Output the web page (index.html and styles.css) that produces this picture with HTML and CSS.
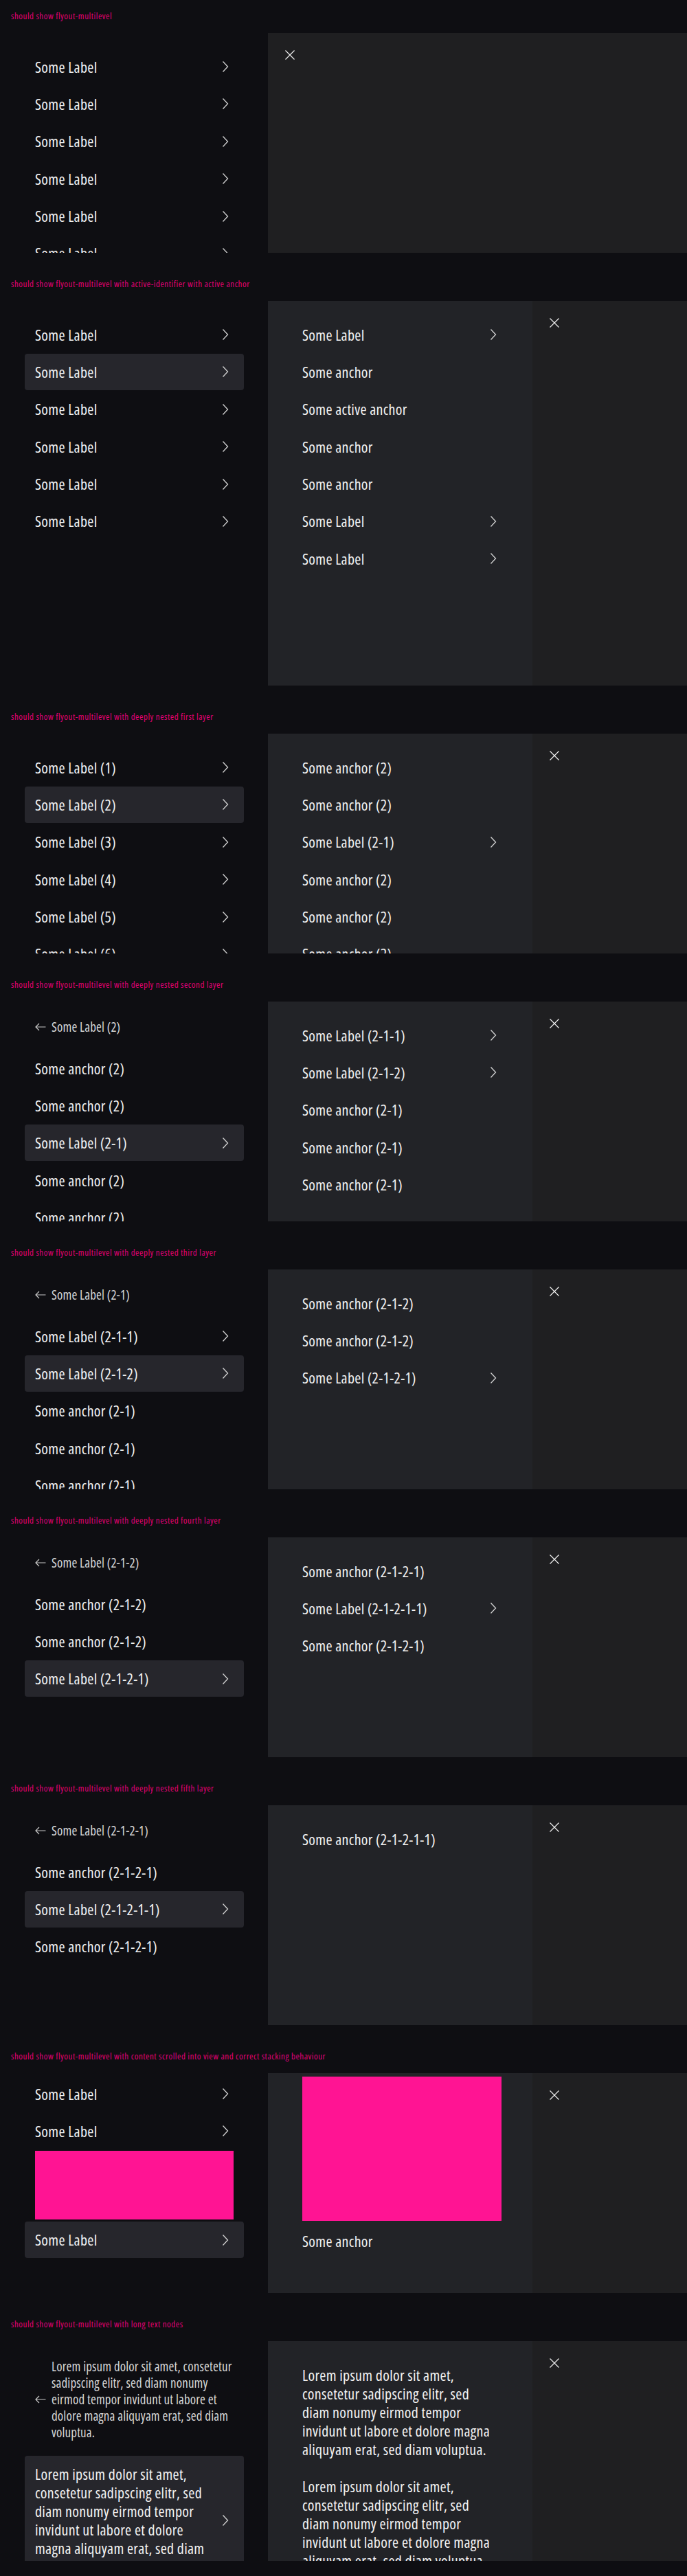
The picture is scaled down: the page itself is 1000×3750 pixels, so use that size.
FILE: index.html
```html
<!DOCTYPE html>
<html lang="en">
<head>
<meta charset="utf-8">
<title>flyout-multilevel</title>
<link rel="stylesheet" href="styles.css">
</head>
<body>

<!-- 1 -->
<section class="demo">
  <p class="demo-title"><span>should show flyout-multilevel</span></p>
  <div class="flyout">
    <div class="col col-main">
      <ul class="list">
        <li class="item"><span class="label">Some Label</span><svg class="chev" viewBox="0 0 24 24"><path d="M8.5 4.5l7 7.5-7 7.5"/></svg></li>
        <li class="item"><span class="label">Some Label</span><svg class="chev" viewBox="0 0 24 24"><path d="M8.5 4.5l7 7.5-7 7.5"/></svg></li>
        <li class="item"><span class="label">Some Label</span><svg class="chev" viewBox="0 0 24 24"><path d="M8.5 4.5l7 7.5-7 7.5"/></svg></li>
        <li class="item"><span class="label">Some Label</span><svg class="chev" viewBox="0 0 24 24"><path d="M8.5 4.5l7 7.5-7 7.5"/></svg></li>
        <li class="item"><span class="label">Some Label</span><svg class="chev" viewBox="0 0 24 24"><path d="M8.5 4.5l7 7.5-7 7.5"/></svg></li>
        <li class="item"><span class="label">Some Label</span><svg class="chev" viewBox="0 0 24 24"><path d="M8.5 4.5l7 7.5-7 7.5"/></svg></li>
      </ul>
    </div>
    <div class="col col-close"><button class="close" aria-label="Close"><svg viewBox="0 0 14 14"><path d="M0.5 0.5l13 13M13.5 0.5l-13 13"/></svg></button></div>
  </div>
</section>

<!-- 2 -->
<section class="demo">
  <p class="demo-title"><span>should show flyout-multilevel with active-identifier with active anchor</span></p>
  <div class="flyout flyout-tall">
    <div class="col col-main">
      <ul class="list">
        <li class="item"><span class="label">Some Label</span><svg class="chev" viewBox="0 0 24 24"><path d="M8.5 4.5l7 7.5-7 7.5"/></svg></li>
        <li class="item is-active"><span class="label">Some Label</span><svg class="chev" viewBox="0 0 24 24"><path d="M8.5 4.5l7 7.5-7 7.5"/></svg></li>
        <li class="item"><span class="label">Some Label</span><svg class="chev" viewBox="0 0 24 24"><path d="M8.5 4.5l7 7.5-7 7.5"/></svg></li>
        <li class="item"><span class="label">Some Label</span><svg class="chev" viewBox="0 0 24 24"><path d="M8.5 4.5l7 7.5-7 7.5"/></svg></li>
        <li class="item"><span class="label">Some Label</span><svg class="chev" viewBox="0 0 24 24"><path d="M8.5 4.5l7 7.5-7 7.5"/></svg></li>
        <li class="item"><span class="label">Some Label</span><svg class="chev" viewBox="0 0 24 24"><path d="M8.5 4.5l7 7.5-7 7.5"/></svg></li>
      </ul>
    </div>
    <div class="col col-sub">
      <ul class="list">
        <li class="item"><span class="label">Some Label</span><svg class="chev" viewBox="0 0 24 24"><path d="M8.5 4.5l7 7.5-7 7.5"/></svg></li>
        <li class="item"><span class="label">Some anchor</span></li>
        <li class="item"><span class="label">Some active anchor</span></li>
        <li class="item"><span class="label">Some anchor</span></li>
        <li class="item"><span class="label">Some anchor</span></li>
        <li class="item"><span class="label">Some Label</span><svg class="chev" viewBox="0 0 24 24"><path d="M8.5 4.5l7 7.5-7 7.5"/></svg></li>
        <li class="item"><span class="label">Some Label</span><svg class="chev" viewBox="0 0 24 24"><path d="M8.5 4.5l7 7.5-7 7.5"/></svg></li>
      </ul>
    </div>
    <div class="col col-close"><button class="close" aria-label="Close"><svg viewBox="0 0 14 14"><path d="M0.5 0.5l13 13M13.5 0.5l-13 13"/></svg></button></div>
  </div>
</section>

<!-- 3 -->
<section class="demo">
  <p class="demo-title"><span>should show flyout-multilevel with deeply nested first layer</span></p>
  <div class="flyout">
    <div class="col col-main">
      <ul class="list">
        <li class="item"><span class="label">Some Label (1)</span><svg class="chev" viewBox="0 0 24 24"><path d="M8.5 4.5l7 7.5-7 7.5"/></svg></li>
        <li class="item is-active"><span class="label">Some Label (2)</span><svg class="chev" viewBox="0 0 24 24"><path d="M8.5 4.5l7 7.5-7 7.5"/></svg></li>
        <li class="item"><span class="label">Some Label (3)</span><svg class="chev" viewBox="0 0 24 24"><path d="M8.5 4.5l7 7.5-7 7.5"/></svg></li>
        <li class="item"><span class="label">Some Label (4)</span><svg class="chev" viewBox="0 0 24 24"><path d="M8.5 4.5l7 7.5-7 7.5"/></svg></li>
        <li class="item"><span class="label">Some Label (5)</span><svg class="chev" viewBox="0 0 24 24"><path d="M8.5 4.5l7 7.5-7 7.5"/></svg></li>
        <li class="item"><span class="label">Some Label (6)</span><svg class="chev" viewBox="0 0 24 24"><path d="M8.5 4.5l7 7.5-7 7.5"/></svg></li>
      </ul>
    </div>
    <div class="col col-sub">
      <ul class="list">
        <li class="item"><span class="label">Some anchor (2)</span></li>
        <li class="item"><span class="label">Some anchor (2)</span></li>
        <li class="item"><span class="label">Some Label (2-1)</span><svg class="chev" viewBox="0 0 24 24"><path d="M8.5 4.5l7 7.5-7 7.5"/></svg></li>
        <li class="item"><span class="label">Some anchor (2)</span></li>
        <li class="item"><span class="label">Some anchor (2)</span></li>
        <li class="item"><span class="label">Some anchor (2)</span></li>
      </ul>
    </div>
    <div class="col col-close"><button class="close" aria-label="Close"><svg viewBox="0 0 14 14"><path d="M0.5 0.5l13 13M13.5 0.5l-13 13"/></svg></button></div>
  </div>
</section>

<!-- 4 -->
<section class="demo">
  <p class="demo-title"><span>should show flyout-multilevel with deeply nested second layer</span></p>
  <div class="flyout">
    <div class="col col-main">
      <ul class="list">
        <li class="back"><svg class="arrow" viewBox="0 0 16 12"><path d="M15.5 6H1M6 1L1 6l5 5"/></svg><span class="back-label">Some Label (2)</span></li>
        <li class="item"><span class="label">Some anchor (2)</span></li>
        <li class="item"><span class="label">Some anchor (2)</span></li>
        <li class="item is-active"><span class="label">Some Label (2-1)</span><svg class="chev" viewBox="0 0 24 24"><path d="M8.5 4.5l7 7.5-7 7.5"/></svg></li>
        <li class="item"><span class="label">Some anchor (2)</span></li>
        <li class="item"><span class="label">Some anchor (2)</span></li>
      </ul>
    </div>
    <div class="col col-sub">
      <ul class="list">
        <li class="item"><span class="label">Some Label (2-1-1)</span><svg class="chev" viewBox="0 0 24 24"><path d="M8.5 4.5l7 7.5-7 7.5"/></svg></li>
        <li class="item"><span class="label">Some Label (2-1-2)</span><svg class="chev" viewBox="0 0 24 24"><path d="M8.5 4.5l7 7.5-7 7.5"/></svg></li>
        <li class="item"><span class="label">Some anchor (2-1)</span></li>
        <li class="item"><span class="label">Some anchor (2-1)</span></li>
        <li class="item"><span class="label">Some anchor (2-1)</span></li>
      </ul>
    </div>
    <div class="col col-close"><button class="close" aria-label="Close"><svg viewBox="0 0 14 14"><path d="M0.5 0.5l13 13M13.5 0.5l-13 13"/></svg></button></div>
  </div>
</section>

<!-- 5 -->
<section class="demo">
  <p class="demo-title"><span>should show flyout-multilevel with deeply nested third layer</span></p>
  <div class="flyout">
    <div class="col col-main">
      <ul class="list">
        <li class="back"><svg class="arrow" viewBox="0 0 16 12"><path d="M15.5 6H1M6 1L1 6l5 5"/></svg><span class="back-label">Some Label (2-1)</span></li>
        <li class="item"><span class="label">Some Label (2-1-1)</span><svg class="chev" viewBox="0 0 24 24"><path d="M8.5 4.5l7 7.5-7 7.5"/></svg></li>
        <li class="item is-active"><span class="label">Some Label (2-1-2)</span><svg class="chev" viewBox="0 0 24 24"><path d="M8.5 4.5l7 7.5-7 7.5"/></svg></li>
        <li class="item"><span class="label">Some anchor (2-1)</span></li>
        <li class="item"><span class="label">Some anchor (2-1)</span></li>
        <li class="item"><span class="label">Some anchor (2-1)</span></li>
      </ul>
    </div>
    <div class="col col-sub">
      <ul class="list">
        <li class="item"><span class="label">Some anchor (2-1-2)</span></li>
        <li class="item"><span class="label">Some anchor (2-1-2)</span></li>
        <li class="item"><span class="label">Some Label (2-1-2-1)</span><svg class="chev" viewBox="0 0 24 24"><path d="M8.5 4.5l7 7.5-7 7.5"/></svg></li>
      </ul>
    </div>
    <div class="col col-close"><button class="close" aria-label="Close"><svg viewBox="0 0 14 14"><path d="M0.5 0.5l13 13M13.5 0.5l-13 13"/></svg></button></div>
  </div>
</section>

<!-- 6 -->
<section class="demo">
  <p class="demo-title"><span>should show flyout-multilevel with deeply nested fourth layer</span></p>
  <div class="flyout">
    <div class="col col-main">
      <ul class="list">
        <li class="back"><svg class="arrow" viewBox="0 0 16 12"><path d="M15.5 6H1M6 1L1 6l5 5"/></svg><span class="back-label">Some Label (2-1-2)</span></li>
        <li class="item"><span class="label">Some anchor (2-1-2)</span></li>
        <li class="item"><span class="label">Some anchor (2-1-2)</span></li>
        <li class="item is-active"><span class="label">Some Label (2-1-2-1)</span><svg class="chev" viewBox="0 0 24 24"><path d="M8.5 4.5l7 7.5-7 7.5"/></svg></li>
      </ul>
    </div>
    <div class="col col-sub">
      <ul class="list">
        <li class="item"><span class="label">Some anchor (2-1-2-1)</span></li>
        <li class="item"><span class="label">Some Label (2-1-2-1-1)</span><svg class="chev" viewBox="0 0 24 24"><path d="M8.5 4.5l7 7.5-7 7.5"/></svg></li>
        <li class="item"><span class="label">Some anchor (2-1-2-1)</span></li>
      </ul>
    </div>
    <div class="col col-close"><button class="close" aria-label="Close"><svg viewBox="0 0 14 14"><path d="M0.5 0.5l13 13M13.5 0.5l-13 13"/></svg></button></div>
  </div>
</section>

<!-- 7 -->
<section class="demo">
  <p class="demo-title"><span>should show flyout-multilevel with deeply nested fifth layer</span></p>
  <div class="flyout">
    <div class="col col-main">
      <ul class="list">
        <li class="back"><svg class="arrow" viewBox="0 0 16 12"><path d="M15.5 6H1M6 1L1 6l5 5"/></svg><span class="back-label">Some Label (2-1-2-1)</span></li>
        <li class="item"><span class="label">Some anchor (2-1-2-1)</span></li>
        <li class="item is-active"><span class="label">Some Label (2-1-2-1-1)</span><svg class="chev" viewBox="0 0 24 24"><path d="M8.5 4.5l7 7.5-7 7.5"/></svg></li>
        <li class="item"><span class="label">Some anchor (2-1-2-1)</span></li>
      </ul>
    </div>
    <div class="col col-sub">
      <ul class="list">
        <li class="item"><span class="label">Some anchor (2-1-2-1-1)</span></li>
      </ul>
    </div>
    <div class="col col-close"><button class="close" aria-label="Close"><svg viewBox="0 0 14 14"><path d="M0.5 0.5l13 13M13.5 0.5l-13 13"/></svg></button></div>
  </div>
</section>

<!-- 8 -->
<section class="demo">
  <p class="demo-title"><span>should show flyout-multilevel with content scrolled into view and correct stacking behaviour</span></p>
  <div class="flyout">
    <div class="col col-main is-scrolled">
      <ul class="list">
        <li class="item"><span class="label">Some Label</span><svg class="chev" viewBox="0 0 24 24"><path d="M8.5 4.5l7 7.5-7 7.5"/></svg></li>
        <li class="item"><span class="label">Some Label</span><svg class="chev" viewBox="0 0 24 24"><path d="M8.5 4.5l7 7.5-7 7.5"/></svg></li>
        <li class="filler filler-sm"></li>
        <li class="item is-active"><span class="label">Some Label</span><svg class="chev" viewBox="0 0 24 24"><path d="M8.5 4.5l7 7.5-7 7.5"/></svg></li>
      </ul>
    </div>
    <div class="col col-sub is-scrolled">
      <ul class="list">
        <li class="filler filler-lg"></li>
        <li class="item"><span class="label">Some anchor</span></li>
      </ul>
    </div>
    <div class="col col-close"><button class="close" aria-label="Close"><svg viewBox="0 0 14 14"><path d="M0.5 0.5l13 13M13.5 0.5l-13 13"/></svg></button></div>
  </div>
</section>

<!-- 9 -->
<section class="demo">
  <p class="demo-title"><span>should show flyout-multilevel with long text nodes</span></p>
  <div class="flyout">
    <div class="col col-main">
      <ul class="list">
        <li class="back"><svg class="arrow" viewBox="0 0 16 12"><path d="M15.5 6H1M6 1L1 6l5 5"/></svg><span class="back-label">Lorem ipsum dolor sit amet, consetetur sadipscing elitr, sed diam nonumy eirmod tempor invidunt ut labore et dolore magna aliquyam erat, sed diam voluptua.</span></li>
        <li class="item is-active"><span class="label">Lorem ipsum dolor sit amet, consetetur sadipscing elitr, sed diam nonumy eirmod tempor invidunt ut labore et dolore magna aliquyam erat, sed diam voluptua.</span><svg class="chev" viewBox="0 0 24 24"><path d="M8.5 4.5l7 7.5-7 7.5"/></svg></li>
      </ul>
    </div>
    <div class="col col-sub">
      <ul class="list">
        <li class="item item-text"><span class="label">Lorem ipsum dolor sit amet, consetetur sadipscing elitr, sed diam nonumy eirmod tempor invidunt ut labore et dolore magna aliquyam erat, sed diam voluptua.</span></li>
        <li class="item item-text"><span class="label">Lorem ipsum dolor sit amet, consetetur sadipscing elitr, sed diam nonumy eirmod tempor invidunt ut labore et dolore magna aliquyam erat, sed diam voluptua.</span></li>
      </ul>
    </div>
    <div class="col col-close"><button class="close" aria-label="Close"><svg viewBox="0 0 14 14"><path d="M0.5 0.5l13 13M13.5 0.5l-13 13"/></svg></button></div>
  </div>
</section>

</body>
</html>
```
FILE: styles.css
```css
html, body {
  margin: 0;
  padding: 0;
  background: #0e0e12;
}

body {
  font-family: "Open Sans", "Roboto", "Liberation Sans", sans-serif;
  font-stretch: 75%;
  color: #f0f0f0;
  width: 1000px;
}

.demo {
  padding: 15px 0 22px;
}

.demo-title {
  margin: 0 0 17px;
  padding-left: 16px;
  height: 16px;
  font-size: 13px;
  line-height: 16px;
  letter-spacing: 0.52px;
  color: #e20074;
  white-space: nowrap;
}

.flyout {
  display: flex;
  height: 320px;
  overflow: hidden;
}

.flyout-tall {
  height: 560px;
}

.col {
  box-sizing: border-box;
  height: 100%;
  overflow: hidden;
}

.col-main {
  flex: 0 0 390px;
  padding: 22.5px 35px 0 36px;
}

.col-sub {
  flex: 0 0 385px;
  padding: 22.5px 30px 0 35px;
  background: #222327;
}

.col-close {
  flex: 1 1 auto;
  padding: 25px 0 0 25px;
  background: #1f1f21;
}

.col-main.is-scrolled {
  padding-top: 3.5px;
}

.col-sub.is-scrolled {
  padding-top: 5px;
}

.list {
  list-style: none;
  margin: 0;
  padding: 0;
}

.item {
  display: flex;
  align-items: center;
  padding: 13px 15px;
  margin-bottom: 1.4px;
  border-radius: 4px;
  font-size: 22px;
  line-height: 27px;
  letter-spacing: 0.3px;
  color: #f2f2f2;
}

.item.is-active {
  background: #26262c;
}

.label {
  flex: 0 1 auto;
  min-width: 0;
}

.item-text .label {
  margin-right: 10px;
}

.chev {
  flex: 0 0 24px;
  width: 24px;
  height: 24px;
  margin-left: auto;
  padding-left: 8px;
  box-sizing: content-box;
  fill: none;
  stroke: #d4d4d4;
  stroke-width: 1.3;
}

.back {
  display: flex;
  align-items: center;
  margin: 2.5px 0 21.5px;
  padding: 0 9px 0 15px;
  font-size: 19px;
  line-height: 24px;
  letter-spacing: 0.15px;
  color: #d6d6d6;
}

.arrow {
  flex: 0 0 16px;
  width: 16px;
  height: 12px;
  margin-right: 8px;
  fill: none;
  stroke: #c8c8c8;
  stroke-width: 1.2;
}

.filler {
  margin: 2px 15px 3.4px;
  background: #ff1493;
}

.filler-sm {
  height: 100px;
}

.filler-lg {
  height: 210px;
  margin-top: 0;
}

.close {
  display: block;
  width: 14px;
  height: 14px;
  padding: 0;
  border: 0;
  background: none;
}

.close svg {
  display: block;
  width: 14px;
  height: 14px;
  fill: none;
  stroke: #f0f0f0;
  stroke-width: 1.2;
}
```
